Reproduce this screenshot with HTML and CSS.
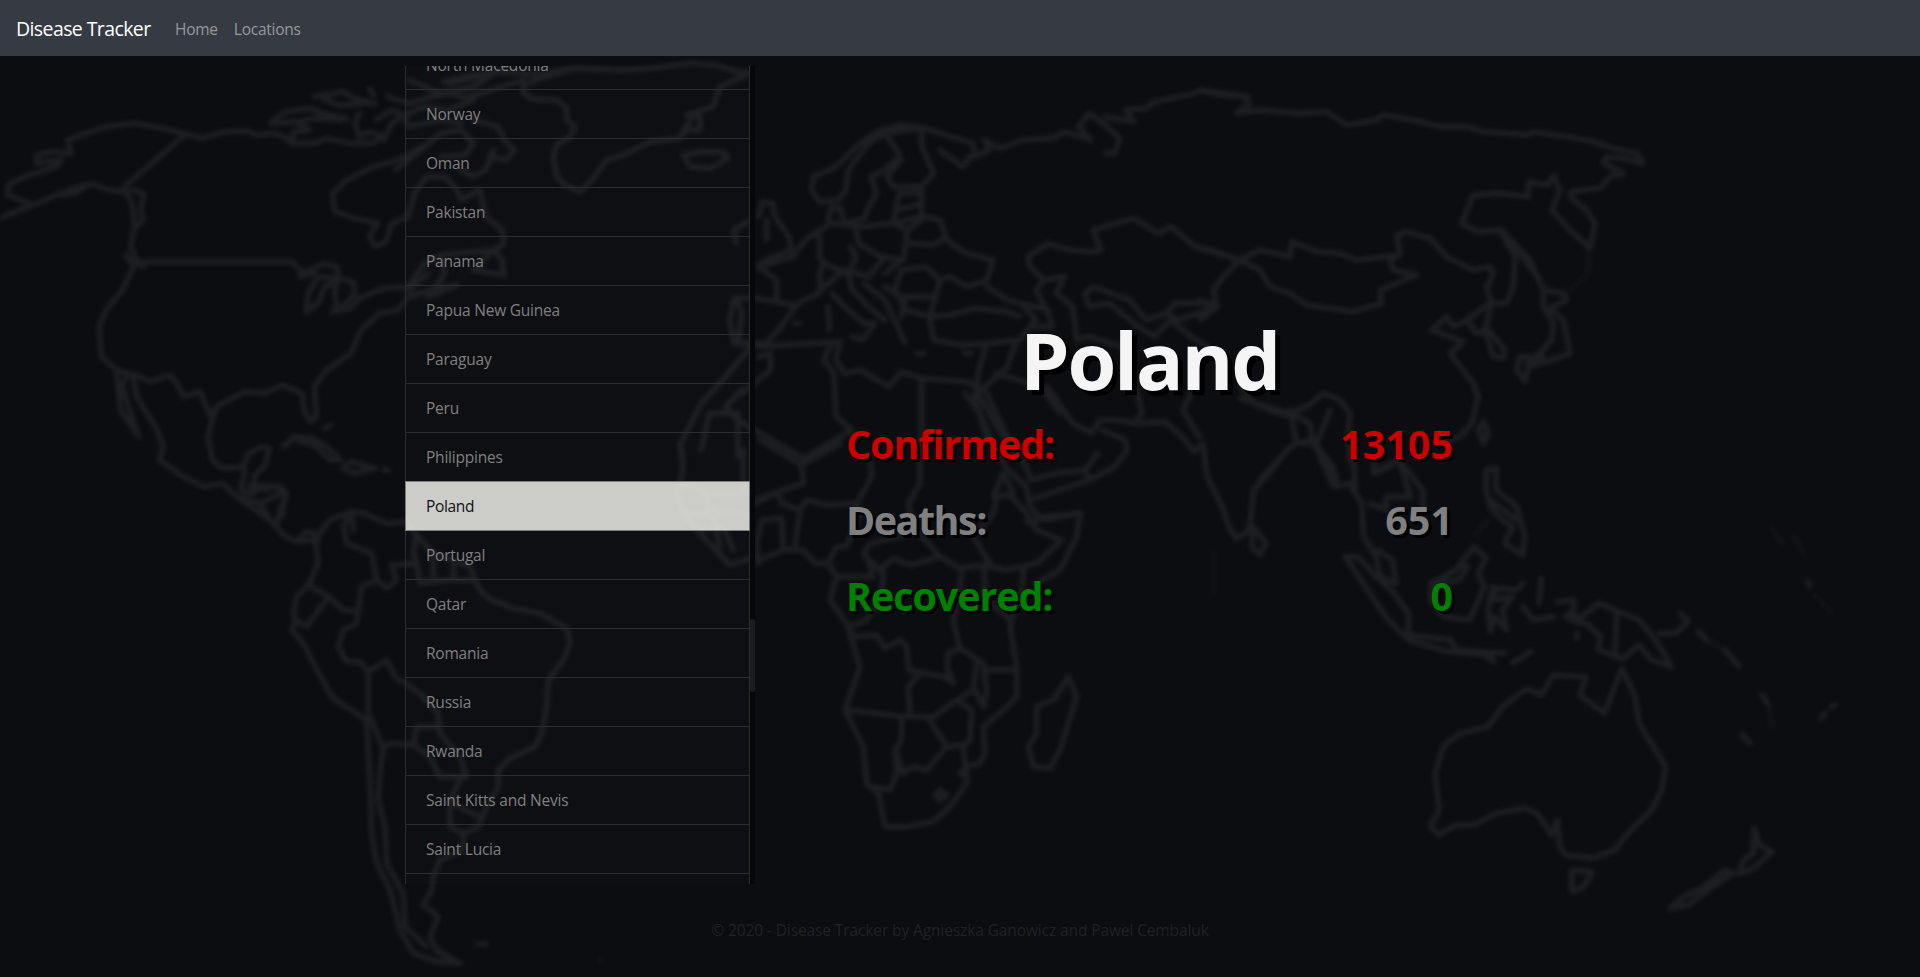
FILE: index.html
```html
<!DOCTYPE html>
<html lang="en">
<head>
<meta charset="utf-8">
<title>Disease Tracker</title>
<link rel="stylesheet" href="styles.css">
</head>
<body>
<svg class="world-map" viewBox="0 0 1920 977" aria-hidden="true">
  <!-- North America -->
  <g transform="translate(0 60) scale(.408163 .333333)">
    <path d="M0 475L60 445 150 400 205 375 230 372 265 390 305 395M150 405L185 400 210 380M70 430L20 405 20 375 60 350 140 320 150 300 90 310 90 285 130 275 175 280 165 240 210 220 260 200 330 190 400 205 455 222 305 380M455 222L495 235 550 215 605 212 625 225 675 220 710 240"/>
    <path d="M305 380L325 440 330 500 320 560 335 600 350 620M325 390L352 400 345 450 350 480 335 500M310 585L325 615 350 605 715 605 745 640 790 612 825 620 830 655 780 650 755 700 750 755 780 730 795 680 825 665 820 700 825 740 815 755 860 745 880 715 910 700 940 685 1000 680 1040 610 1080 585 1210 570M735 650L770 640M830 655L865 665 870 700 840 740"/>
    <path d="M325 625L300 690 260 750 243 800 248 890 285 930 330 945 370 965 415 945 430 965 450 1010 490 995 520 1080M285 930L295 1050 340 1130 320 1060 300 980 310 940M325 950L335 1010 385 1110 400 1160 390 1200 450 1250 500 1280 545 1270 580 1310 620 1345 660 1380M520 1080L530 1040 600 995 650 1000 690 975 740 1000 745 1050 760 1085 775 1070 770 980 800 930 860 880 885 810 930 760 975 750 1000 710 1060 690"/>
    <path d="M520 1080L510 1130 520 1200 545 1225 595 1220 610 1180 640 1160 660 1165 650 1215 625 1245 620 1290M600 1225L590 1290 620 1300M625 1290L680 1280 700 1300 690 1370M695 1160L720 1130 765 1135 800 1160 835 1200 810 1200 770 1155 730 1140M840 1225L860 1205 920 1225 870 1240ZM940 1230h12M795 1105L810 1095"/>
    <path d="M820 455L815 400 850 360 905 325 960 305 1000 285 1050 250 1075 225M820 455L870 475 925 490 905 530 920 560 945 545 960 490 1000 470 1015 400 1045 350 1090 350 1120 390 1130 420 1175 390 1190 470 1230 510 1235 550 1210 570 1230 600 1235 645 1160 630 1200 580M1060 690L1120 675 1050 710 1090 640 1080 590M1000 690L1050 640"/>
    <path d="M665 185L700 155 760 145 790 160 850 175 830 180 770 175 730 185 665 190M730 190L760 210 720 215 715 250 770 250 800 235 860 250 910 250 940 230 905 215 880 230 870 190 880 160M770 110L840 95 870 115 920 130 830 135 790 115M905 85L915 105M920 180L960 150 990 165 960 190 940 240M950 110L1000 130 1060 110 1100 100 1160 120 1100 150 1040 140 990 165 1000 200 1080 180 1130 190M1000 60L1080 100 1160 80 1210 40 1100 70M1080 220L1130 210 1160 250 1140 285 1080 290M1160 180L1220 200 1235 240 1260 270 1240 300 1200 290 1210 270 1190 330 1160 350 1130 330M970 330L1010 290 1060 240"/>
  </g>
  <!-- Greenland and Iceland -->
  <g transform="translate(390 50) scale(.333333)">
    <path d="M400 105L400 130 430 148 500 150 530 175 530 210 555 230 540 260 500 285 490 320 500 380 525 405 570 425 610 385 650 330 700 315 780 275 870 265 900 215 880 240 930 240 930 200 890 195 970 170 990 110 1080 70 1040 65 980 45 900 40 780 55 700 60 550 55 470 80ZM160 95L250 75 330 65 450 75 540 55M240 140L400 90M880 315L930 305 1000 305 1015 325 960 355 900 350Z"/>
  </g>
  <!-- South America -->
  <g transform="translate(240 480) scale(.333333)">
    <path d="M0 50L60 70 90 120 130 165 170 185 200 155 235 165M30 15L120 20 140 40 120 90 110 130M60 70L130 35M170 185L235 180"/>
    <path d="M235 165L270 120 335 95 370 100 440 130 500 125 530 165 580 220 690 260 715 325 745 355 820 385 900 400 980 445 990 490 970 540 925 600 920 680 905 760 885 800 810 835 775 870 775 920 740 980 715 1040 670 1060 630 1040 630 960 660 900M670 1060L670 1110 600 1140 580 1190 575 1230 550 1275 595 1310 570 1370 590 1410 660 1450 590 1445 520 1420 480 1350 450 1230 410 1150 395 1060 390 900 380 720 280 655 230 570 190 490 155 450 170 420 200 440 265 350 205 315 170 350 160 400 170 430M205 315L235 250 225 170"/>
    <path d="M335 95L310 140 320 190 395 220 410 300 440 325 470 300 455 255 530 250 540 310 620 300 690 300M335 100L340 150M265 350L310 390 355 395 365 320 410 300M355 395L350 430 310 450 295 500 320 545 360 545 385 575 440 540 465 590 540 640 595 700 600 760 660 830 680 890 600 890 570 830 520 795 450 790 430 805 385 700 385 575M430 805L420 880 415 960 435 1040 440 1150 490 1240 495 1340 560 1400M520 795L530 740 600 740M640 970L715 1010M530 165L520 220 530 250M580 230V290M640 250V300M715 1392h25"/>
    <path class="faint" d="M1080 1440h8M590 1425L640 1450"/>
  </g>
  <!-- Europe, western Asia, northern Africa -->
  <g transform="translate(640 60) scale(.408163 .333333)">
    <path d="M290 470L300 425 325 430 330 470 365 530 370 570 330 590 295 610M310 480V540M235 550L230 510 265 485"/>
    <path d="M440 425L420 390 425 350 480 320 530 260 580 215 640 195 700 205 760 230 815 250 820 275 790 320 735 270M820 290L855 270 845 240 880 265 940 240 1010 235 1040 215 1105 240 1075 200 1100 160 1140 195 1175 235 1165 280 1140 280M1140 170L1210 185 1190 150 1240 145 1260 125 1360 100 1375 90 1490 110"/>
    <path d="M440 425L485 420 505 390 510 330 560 250 600 220 635 280M635 290L600 330 565 350 580 400 560 440 550 475 500 490 490 440M600 220L690 205 690 260 720 340 690 380 620 380 605 350 640 300M690 380V470L620 490 635 400 690 400M630 450L690 430M460 480L470 440 490 450M465 490L540 500 620 490 655 510 650 560 645 600 590 590 535 550 530 510M455 500L410 535 385 570 375 590 310 615M440 530V590L450 610 440 640 440 700 400 720 380 740 345 800 310 850 230 850 220 780 230 715 290 715 375 735M240 730L250 760 240 850"/>
    <path d="M450 610L510 640 530 590 515 560M440 690L500 630 560 650 600 590M290 620L335 660 335 715M470 700L500 740 550 790 575 790 545 840 520 830M510 640L520 690 560 740 600 780M550 670L600 720 620 770 650 850M600 680L650 720 640 770M600 640L640 600M655 550L720 555 750 530 735 480 700 470 655 510M750 540L800 580 865 600 850 660 800 680 760 650 735 660 700 620 640 630M735 660L710 770 650 750 625 690 640 630M650 710H720M850 680L900 720 1000 750M710 770L760 765 820 745 900 755 930 770M710 780L720 840 790 855 850 850 930 840 970 780 940 740M850 850L830 930 820 1010M920 850L900 920 820 1010M460 740L465 810M380 790h10M680 880h15M795 880h15"/>
    <path d="M290 860L350 855 490 845 480 900 500 940 540 930 610 980 640 935 690 955 800 965 830 980M290 890L320 880 320 930 250 1000M270 860L210 950 150 1030 100 1150 105 1200M250 990L210 1040 240 1080 400 1195 520 1110 480 1070 475 940 450 900 470 850M690 955V1190M150 1170L170 1060 240 1060V1190M820 1010L850 1140M850 1000L920 1180M870 940L980 980 1030 1060"/>
    <path d="M1130 570L1110 575 1050 570 1000 550 950 590 955 620 990 660 970 690 1000 760 1010 800 970 800M990 660L1040 650 1020 700 1060 740 1070 840 1100 830M1130 570L1110 510 1210 475 1270 520 1300 500 1360 560 1400 570 1480 605M1415 740L1320 780 1290 760 1240 780 1200 720 1110 680 1090 700 1100 740 1150 730 1220 800 1260 830 1300 780M1290 760L1310 730 1410 730M1100 830L1180 860 1200 900M1300 780L1350 830 1390 860M1200 900L1230 1060 1210 1090M1350 1000L1330 1050 1370 1130"/>
  </g>
  <!-- Eastern Asia -->
  <g transform="translate(1200 60) scale(.333333)">
    <path d="M0 90L60 105 130 110 150 130 110 160 180 150 300 160 380 155 440 195 530 180 550 165 640 180 720 200 800 200 850 215 985 225 1000 215 1100 230 1180 245 1240 265 1310 280 1330 310 1270 295 1220 290 1210 310 1270 340 1230 350 1200 385 1110 395 1120 420 1160 450 1185 490 1170 565 1110 510 1055 450 1080 390 1060 345 1045 375 985 365 985 410 900 400 820 405 785 490 835 515 905 510 990 600 1030 690 1030 740 1060 790 1055 840 1010 890 960 890 950 930 975 965 985 920 1040 905 1110 880 1090 780 1050 745 1100 720 1090 700 1030 690"/>
    <path d="M905 520L945 590 940 680 920 730 870 730 800 780 830 820 865 810 915 870 910 895 880 890 855 810 875 730 860 680 880 640 870 620 820 630 740 590 690 535 620 515 590 525 600 580 570 600 580 630 650 645 540 690 545 730 460 755 320 735 270 700 210 680 180 630 120 600 0 565M120 600L180 570 270 590 275 545 350 575 420 580 470 600 600 585M120 600L70 650 40 690 50 740 0 780M0 720L50 740M800 780L760 800 740 770 695 810 790 845 750 880 820 970 835 1010 815 1090 780 1130 720 1150M850 1085L865 1120 850 1150 835 1110Z"/>
    <path d="M120 1015L200 1040 270 1060 320 1040 370 1000 420 1020 450 1060 445 1110 450 1200M270 1050L290 1150 340 1150 330 1090 290 1070M340 1150L410 1250M390 1050L350 1150M270 1160L180 1260M920 530L1020 660M980 910L1030 890"/>
    <path class="faint" d="M1170 570L1165 640 1110 690"/>
  </g>
  <!-- Arabia and India -->
  <g transform="translate(820 300) scale(.42091 .333333)">
    <path d="M540 260L600 370 645 400 665 360 700 360 760 370 820 365 860 410 890 455 910 430 920 530 955 620 975 690 990 715 1020 690 1030 570 1060 530 1110 450 1130 430M670 390L725 420 730 450 700 500 640 540 500 600M345 280L380 340 410 430 440 500 490 560 500 620 520 650 620 640M380 290L430 400 490 500 500 540 560 520 630 510 660 460M630 510L640 540M1030 680L1060 730 1045 765 1025 740ZM1000 260L1030 310 1090 340 1130 350M1130 430L1170 420 1220 560 1260 550"/>
    <path class="faint" d="M935 760V880"/>
  </g>
  <!-- Africa -->
  <g transform="translate(700 440) scale(.333333)">
    <path d="M165 190L235 155 310 130 305 75 180 0M305 75L420 10M235 155L245 190 300 210 320 180 380 195 470 190 515 110 510 50M660 0V130L625 190 640 260 720 350M175 370L170 310 185 240 245 235 250 330 175 360M285 320L300 210M250 330L310 330 345 370 385 370 410 320 440 320 480 220 470 190"/>
    <path d="M385 370L410 410 390 480 440 550 480 680 435 810 490 920 500 1030 535 1060 555 1160 620 1160 700 1145 750 1100 800 1030 790 920 810 900 815 810 770 780 700 830 620 830 440 810M410 410L520 410 500 350 490 340 510 310 600 290 650 270M500 350L540 390 580 355 630 375 720 350 780 385 850 375 920 390 1010 370 1085 300 1010 270 980 220 930 165 890 170 880 220 820 290 870 370"/>
    <path d="M550 390L545 470 500 540 450 560M440 550L460 590 530 585 555 625 600 600 620 620 625 690 730 710 760 730 740 680 745 640 780 625 760 540 780 440 785 385M780 625L850 670 860 760 850 800 820 740 830 670M850 375L855 430 850 470 930 540M850 690L950 690M970 390L965 450 930 560 950 680 950 770 910 810 850 860 855 940 840 970 800 980M660 700L625 740 630 830M770 780L820 750M605 830V900L585 930 590 1000 570 1050 520 1040M610 1000L640 980 680 990 740 920 790 915M740 920L690 840M585 930L610 1000"/>
    <path d="M705 1065L720 1050 740 1065 720 1080ZM780 1000L800 992 798 1012ZM1105 710L1130 770 1080 930 1050 985 1000 980 985 920 1010 880 1010 800 1060 780ZM980 245L1060 235 1140 220 1130 290 1080 390 1010 430M880 170L910 100 940 160"/>
  </g>
  <g transform="translate(390 450) scale(.333333)">
    <path d="M870 -20L880 60 860 130 880 190 930 250 1020 345 1100 320M1060 0V130H950M880 110L940 120 960 180 1060 190M880 190L950 190M920 240L1000 230 1030 300M970 200L990 290M1095 150L1180 120"/>
  </g>
  <!-- South-east Asia and Oceania -->
  <g transform="translate(1280 440) scale(.408163 .333333)">
    <path d="M80 0L130 80 140 140 170 130 200 190 205 290 235 350 245 410 285 430 275 360 240 330M180 60L185 150M240 90L290 60 350 150 350 200M220 190L260 210 260 170 320 170 290 60M230 60V100L270 80M160 350L190 350 245 420 280 460 315 520 315 600 265 540 220 460ZM315 600L410 635 520 645M320 585L420 600 430 630 550 640M490 640L525 665M570 670L615 635"/>
    <path d="M370 430L430 390 475 320 505 355 485 400 500 440 465 540 400 530 370 480ZM440 380H460L440 420 380 430M505 90L530 85 530 150 580 200 600 290 595 345 550 310 570 260 545 240 515 200 505 150ZM515 180L580 240M595 430L580 450 530 445 520 480 570 470 545 510 555 570 525 530 515 575 510 510 520 440M640 415L635 490M595 500L620 540 670 530M680 485L720 480 720 510 700 530 740 530 780 490 830 515 880 540 920 600 960 680 910 660 880 615 840 655 780 630 785 590 750 550 710 540M825 515L820 650M930 580L970 580 1000 545 980 520M1025 575L1045 600M1090 630L1125 680M728 580v15"/>
    <path class="faint" d="M480 285L510 240M1205 265L1230 310M1260 290L1285 345M1310 465L1350 515M1195 790L1205 860M1045 600L1090 630"/>
    <path d="M1293 425L1297 438M1180 765L1195 790M1133 885L1152 910M1325 835L1335 820M1352 800L1360 795M605 745L640 765 670 705 750 710 735 765 795 820 820 740 838 685 870 770 880 850 910 910 945 980 935 1050 910 1110 860 1170 820 1230 765 1255 700 1245 685 1220 680 1140 665 1185 630 1120 600 1105 530 1120 475 1155 430 1155 390 1185 368 1160 390 1110 380 1000 400 920 440 880 510 860 545 800ZM715 1290L765 1295 745 1340 715 1355ZM1162 1165L1175 1215 1205 1235 1160 1285 1125 1300 1135 1260 1160 1240ZM1090 1290L1110 1300 1060 1340 1000 1395 955 1405 990 1370 1040 1340Z"/>
  </g>
</svg>

<header class="navbar">
  <a class="brand">Disease Tracker</a>
  <nav class="nav-links"><a>Home</a><a>Locations</a></nav>
</header>

<main class="content">
  <section class="locations">
    <ul class="location-list">
      <li>North Macedonia</li>
      <li>Norway</li>
      <li>Oman</li>
      <li>Pakistan</li>
      <li>Panama</li>
      <li>Papua New Guinea</li>
      <li>Paraguay</li>
      <li>Peru</li>
      <li>Philippines</li>
      <li class="active">Poland</li>
      <li>Portugal</li>
      <li>Qatar</li>
      <li>Romania</li>
      <li>Russia</li>
      <li>Rwanda</li>
      <li>Saint Kitts and Nevis</li>
      <li>Saint Lucia</li>
      <li></li>
    </ul>
    <div class="scroll-track"><div class="scroll-thumb"></div></div>
  </section>
  <section class="stats">
    <h1>Poland</h1>
    <div class="stat confirmed"><span class="label">Confirmed:</span><span class="value">13105</span></div>
    <div class="stat deaths"><span class="label">Deaths:</span><span class="value">651</span></div>
    <div class="stat recovered"><span class="label">Recovered:</span><span class="value">0</span></div>
  </section>
</main>

<footer class="footer"><span>© 2020 - Disease Tracker by Agnieszka Ganowicz and Pawel Cembaluk</span></footer>
</body>
</html>
```
FILE: styles.css
```css
* { box-sizing: border-box; }

body {
  margin: 0;
  height: 977px;
  overflow: hidden;
  display: flex;
  flex-direction: column;
  background: #0b0d10;
  color: #808080;
  font: 16px/24px "Segoe UI", "Open Sans", "Noto Sans", sans-serif;
}

.world-map {
  position: absolute;
  left: 0;
  top: 0;
  z-index: -1;
  width: 1920px;
  height: 977px;
  opacity: .072;
  filter: blur(2px);
}

.world-map path {
  fill: none;
  stroke: #fff;
  stroke-width: 5.5px;
  stroke-linejoin: round;
  stroke-linecap: round;
  vector-effect: non-scaling-stroke;
}

.world-map .faint {
  stroke-opacity: .35;
}

.navbar {
  height: 56px;
  flex: none;
  display: flex;
  align-items: center;
  padding: 1px 16px 0;
  background: #363a42;
}

.brand {
  width: 159px;
  color: #fff;
  font-size: 19.5px;
  letter-spacing: -.6px;
}

.nav-links {
  display: flex;
  gap: 16px;
  color: #97999c;
  font-size: 15.5px;
  letter-spacing: -.25px;
}

.content {
  height: 818px;
  flex: none;
  display: flex;
  margin-top: 10px;
  padding-left: 405px;
}

.locations {
  width: 350px;
  display: flex;
  overflow: hidden;
}

.location-list {
  width: 345px;
  margin: -26px 0 0;
  padding: 0;
  list-style: none;
  font-size: 15.5px;
  letter-spacing: -.22px;
}

.location-list li {
  height: 49px;
  padding: 12px 20px;
  border: 1px solid #2c2d2f;
  border-bottom: 0;
  background: rgba(255, 255, 255, .01);
}

.location-list .active {
  height: 50px;
  margin-bottom: -1px;
  position: relative;
  border: 1px solid #7d7f7e;
  background: rgba(252, 253, 246, .8);
  color: #101114;
  font-weight: 500;
  letter-spacing: -.35px;
}

.scroll-track {
  width: 5px;
  background: #060708;
}

.scroll-thumb {
  height: 73px;
  margin-top: 553px;
  border-radius: 2px;
  background: #1b1c20;
}

.stats {
  width: 607px;
  margin-left: 91px;
  padding-top: 246px;
  font-weight: 700;
}

.stats h1 {
  margin: 0 0 12px;
  color: #f5f5f5;
  font-size: 79px;
  line-height: 96px;
  letter-spacing: -2.2px;
  text-align: center;
  text-shadow: 5px 5px 0 #000;
}

.stat {
  height: 76px;
  display: flex;
  justify-content: space-between;
  font-size: 39.5px;
  line-height: 48px;
  letter-spacing: -1.1px;
  text-shadow: 3px 3px 0 #000;
}

.stat .value { letter-spacing: 0; }

.confirmed { color: #c00; }
.deaths { color: #808080; letter-spacing: -1.5px; }
.recovered { color: #008000; }

.footer {
  height: 76px;
  margin-top: 17px;
  display: flex;
  justify-content: center;
  padding-top: 17px;
  color: #202124;
  font-size: 15.5px;
  letter-spacing: -.11px;
}
```
